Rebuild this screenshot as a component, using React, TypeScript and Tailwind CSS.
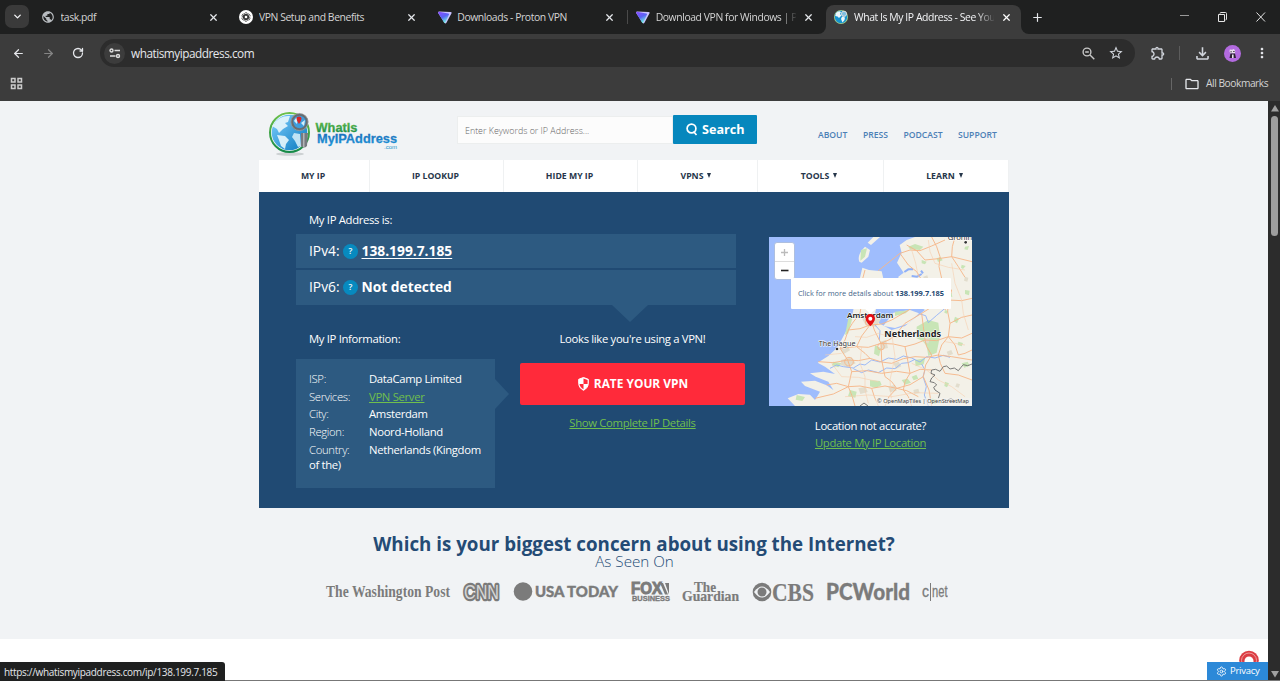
import React from 'react';
import { ArrowLeft, ArrowRight, RotateCw, X, Plus, ChevronDown, Settings } from 'lucide-react';
import { MdOutlineExtension, MdOutlineFileDownload, MdMoreVert, MdStarBorder, MdOutlineFolder, MdPublic } from 'react-icons/md';

function OpenAiIcon() {
  return (
    <svg width="14" height="14" viewBox="0 0 14 14">
      <circle cx="7" cy="7" r="7" fill="#fff" />
      <g fill="none" stroke="#222" strokeWidth=".7">
        {[0, 60, 120, 180, 240, 300].map((a) => (
          <path key={a} transform={`rotate(${a} 7 7)`} d="M5.4 7.900V4.300a1.700 1.700 0 0 1 3.100-.9M5.400 5.200L7 4.300 10 6" />
        ))}
      </g>
    </svg>
  );
}

function ProtonIcon({ id }: { id: string }) {
  return (
    <svg width="14" height="13" viewBox="0 0 14 13">
      <defs>
        <linearGradient id={id} x1="0" y1="0" x2=".5" y2="1">
          <stop offset="0" stopColor="#8b4dff" />
          <stop offset=".55" stopColor="#5a62f5" />
          <stop offset="1" stopColor="#6df0e0" />
        </linearGradient>
      </defs>
      <path d="M1.3.5L12.6.9Q14.2 1.200 13.4 2.600L8.6 11.6Q7.4 13.3 6.3 11.6L.3 2.2Q-.4.6 1.3.5Z" fill="#c9c2ff" />
      <path d="M1 .8L10.2 2.4Q11.5 2.7 10.8 4L7.2 11.4Q6.6 12.3 6 11.5L.4 2.2Q-.2 1 1 .8Z" fill={`url(#${id})`} />
    </svg>
  );
}

function GlobeIcon() {
  return (
    <svg width="14" height="14" viewBox="0 0 14 14">
      <circle cx="7" cy="7" r="7" fill="#9fd08f" />
      <circle cx="7" cy="7" r="6.2" fill="#1593cf" />
      <path d="M2 3Q5 0 7 2L6 4 7.5 5.5 5 8 3.5 6.5 1.2 6ZM8 6.5L11 7.5 10.5 10 8.5 12.5 7 9Z" fill="#eef7fa" />
      <circle cx="10" cy="3.8" r="2.6" fill="#7fbfe0" stroke="#ddd" strokeWidth="1" />
    </svg>
  );
}

const TABS = [
  { title: 'task.pdf', icon: <MdPublic className="size-3.5 text-[#b8bcc0]" /> },
  { title: 'VPN Setup and Benefits', icon: <OpenAiIcon /> },
  { title: 'Downloads - Proton VPN', icon: <ProtonIcon id="pa" /> },
  { title: 'Download VPN for Windows | Pr', icon: <ProtonIcon id="pb" /> },
];

function BrowserChrome() {
  return (
    <div className="h-[101px] shrink-0 bg-[#3c3c3c]">
      <div className="flex h-[34px] bg-[#3c3c3c] text-[10.4px] tracking-[-0.42px]">
        <div className="flex w-[826px] shrink-0 rounded-br-[8px] bg-[#1f2020]">
          <div className="mt-[5px] ml-[5px] flex h-[23px] w-6 shrink-0 items-center justify-center rounded-[7px] bg-[#3a3a3a]">
            <ChevronDown className="size-[11px] text-gray-100" strokeWidth={3} />
          </div>
          <div className="ml-[3px] flex">
            {TABS.map((t, i) => (
              <div key={t.title} className="relative flex h-[34px] w-[198.4px] items-center pl-[9px]">
                {i === 3 && <span className="absolute left-0 h-3.5 w-px bg-[#4a4a4a]" />}
                <span className="w-[19.5px] shrink-0">{t.icon}</span>
                <span
                  className={
                    i === 3
                      ? 'w-[140px] overflow-hidden pt-[2px] whitespace-nowrap [mask-image:linear-gradient(to_right,black_125px,transparent_142px)]'
                      : 'w-[140px] overflow-hidden pt-[2px] whitespace-nowrap'
                  }
                >
                  {t.title}
                </span>
                <X className="ml-[7px] size-[11px] shrink-0 text-gray-200" strokeWidth={2.7} />
              </div>
            ))}
          </div>
        </div>
        <div className="w-[195px] shrink-0 bg-[#1f2020]">
          <div className="mt-[5px] flex h-[29px] items-center rounded-t-[8px] bg-[#3c3c3c] pb-[5px] pl-[8px]">
            <span className="w-5 shrink-0"><GlobeIcon /></span>
            <span className="w-[140px] overflow-hidden pt-px whitespace-nowrap text-gray-100 [mask-image:linear-gradient(to_right,black_122px,transparent_142px)]">
              What Is My IP Address - See You
            </span>
            <X className="ml-[7px] size-[11px] shrink-0 text-white" strokeWidth={2.7} />
          </div>
        </div>
        <div className="flex flex-1 items-center rounded-bl-[8px] bg-[#1f2020] pl-[10px]">
          <Plus className="size-[13px] text-gray-200" strokeWidth={2.2} />
          <svg className="ml-[135px]" width="90" height="12" viewBox="0 0 90 12" fill="none" stroke="#e5e5e5">
            <path d="M1 4.5H10" stroke="#999" />
            <path d="M39.5 3.5h6v7h-6zM41 2.5q0-1 1-1h4.500q1 0 1 1V8q0 1-1 1" />
            <path d="M77.500 1.500l8.500 9M86 1.500l-8.500 9" />
          </svg>
        </div>
      </div>
      <div className="flex h-[38px] items-center">
        <ArrowLeft className="ml-[12px] size-[13px] text-gray-200" strokeWidth={2.3} />
        <ArrowRight className="ml-[17px] size-[13px] text-[#858585]" strokeWidth={2.3} />
        <RotateCw className="ml-[17px] size-[12px] text-gray-200" strokeWidth={2.6} />
        <div className="ml-[16px] flex h-7 w-[1035px] items-center rounded-full bg-[#2c2c2c]">
          <div className="ml-[4px] flex size-[21px] items-center justify-center rounded-full bg-[#3c3c3c]">
            <svg width="12" height="11" viewBox="0 0 12 11" fill="none" stroke="#ddd" strokeWidth="1.400">
              <circle cx="2.500" cy="2.500" r="1.500" /><path d="M5.500 2.500H11M1 8H6.500" /><circle cx="9" cy="8" r="1.500" />
            </svg>
          </div>
          <span className="ml-[6px] flex-1 pt-px text-[11.8px] tracking-[-0.48px] text-gray-200">whatismyipaddress.com</span>
          <svg width="13" height="13" viewBox="0 0 13 13" fill="none" stroke="#c8c8c8" strokeWidth="1.400">
            <circle cx="5" cy="5" r="3.900" /><path d="M8 8l4.300 4.300M3.200 5h3.600" />
          </svg>
          <MdStarBorder className="mr-[11px] ml-[13px] size-4 text-gray-300" />
        </div>
        <MdOutlineExtension className="ml-[15px] size-4 text-gray-300" />
        <span className="ml-[13px] h-3.5 w-px bg-[#5c5c5c]" />
        <MdOutlineFileDownload className="ml-[13px] size-[19px] text-gray-300" />
        <svg className="ml-[12px]" width="17" height="17" viewBox="0 0 17 17">
          <circle cx="8.500" cy="8.500" r="8.500" fill="#b36be0" />
          <path d="M5.500 6.500L5.800 4.500 8 4.800 10 4 11.300 6.500 10.800 8.500 6.500 8.500Z" fill="#e8e1ee" />
          <path d="M6.500 6.800h1.200M9.300 6.500h1.200" stroke="#241b2b" />
          <path d="M6.500 8.500h4.500l1 4.500H5.500Z" fill="#2b2033" />
          <path d="M8 9.500h1.600V13H8Z" fill="#e8e1ee" />
        </svg>
        <MdMoreVert className="ml-[13px] size-4 text-gray-200" />
      </div>
      <div className="flex h-[29px] items-center justify-between pt-px">
        <svg className="-mt-2 ml-[10px]" width="13" height="13" viewBox="0 0 13 13" fill="none" stroke="#ccc" strokeWidth="1.500">
          <path d="M1.500 1.500h3.500v3.500H1.500zM8 1.500h3.500v3.500H8zM1.500 8h3.500v3.500H1.500zM8 8h3.500v3.500H8z" />
        </svg>
        <div className="-mt-[7px] flex items-center">
          <span className="h-3 w-px bg-[#666]" />
          <MdOutlineFolder className="ml-[12px] size-4 text-gray-200" />
          <span className="ml-[6px] w-[74px] text-[10.2px] tracking-[-0.44px] whitespace-nowrap">All Bookmarks</span>
        </div>
      </div>
    </div>
  );
}

function SiteLogo() {
  return (
    <svg width="136" height="48" viewBox="-1 -1 136 48" className="shrink-0">
      <defs>
        <linearGradient id="sea" x1="0" y1="0" x2="1" y2="1"><stop stopColor="#7fd0ff" /><stop offset="1" stopColor="#0878bd" /></linearGradient>
        <linearGradient id="grn" x1="0" y1="0" x2="0" y2="1"><stop stopColor="#6cc04a" /><stop offset="1" stopColor="#168a48" /></linearGradient>
        <linearGradient id="blu" x1="0" y1="0" x2="0" y2="1"><stop stopColor="#1868b4" /><stop offset="1" stopColor="#1e97da" /></linearGradient>
      </defs>
      <ellipse cx="22" cy="43" rx="14" ry="1.800" fill="#cdd1d3" />
      <circle cx="21.500" cy="21.500" r="19.500" fill="#f7fbfa" stroke="url(#grn)" strokeWidth="2" />
      <circle cx="21.500" cy="21.500" r="17.800" fill="url(#sea)" />
      <path d="M6 13Q12 4 22 5l-2 6-3 1 3 3-5 3-4 4-2-4-5-3ZM9 24l8 1 4 4-3 4-1 5-4-3-2-6Z" fill="#e5f5fb" opacity=".92" />
      <path d="M26 22l6 1 1 12-3 1-3-6-3-4Z" fill="#bfe3f5" />
      <path d="M33 22h7l-1 13q-3 3-6 0Z" fill="#777b80" /><path d="M35 22h1.500v14H35Z" fill="#b3b5b7" />
      <circle cx="31.500" cy="11" r="7.500" fill="#3e9ddd" stroke="#686d72" strokeWidth="2.600" />
      <circle cx="31.500" cy="11" r="8.600" fill="none" stroke="#a9adb0" strokeWidth=".6" />
      <path d="M26 10q2-4 4-3l-1 6ZM33 12l4-3-1 6Z" fill="#d6effb" />
      <path d="M31 13q-5-7.500 0-7.500t0 7.500" fill="#d72628" />
      <g fontFamily="Liberation Sans" fontWeight="bold" strokeWidth=".3">
        <text x="47.500" y="20.500" fontSize="13.500" textLength="42" lengthAdjust="spacingAndGlyphs" fill="url(#grn)" stroke="url(#grn)">WhatIs</text>
        <text x="49" y="32" fontSize="13.500" textLength="80" lengthAdjust="spacingAndGlyphs" fill="url(#blu)" stroke="url(#blu)">MyIPAddress</text>
        <text x="116" y="37.500" fontSize="6" fontWeight="normal" textLength="13" fill="#2295cd">.com</text>
      </g>
    </svg>
  );
}

const NAV = [
  { label: 'MY IP', cls: 'w-[111px]' },
  { label: 'IP LOOKUP', cls: 'w-[134px]' },
  { label: 'HIDE MY IP', cls: 'w-[134px]' },
  { label: 'VPNS', cls: 'w-[120px]', menu: true },
  { label: 'TOOLS', cls: 'w-[126px]', menu: true },
  { label: 'LEARN', cls: 'w-[125px]', menu: true },
];

function SiteHeader() {
  return (
    <header>
      <div className="flex h-[59px]">
        <div className="ml-2 w-[190px] pt-[9px]"><SiteLogo /></div>
        <div className="mt-[14px] flex h-[29px] w-[300px]">
          <div className="mt-px flex h-7 w-[216px] items-center border border-[#eceeee] bg-[#fcfcfc] pt-px pl-[7px] text-[8.9px] font-light text-[#666]">
            Enter Keywords or IP Address...
          </div>
          <div className="flex w-[84px] items-center rounded-[1px] bg-[#0687bd] pl-[13px] text-[12.6px] font-bold text-white">
            <svg width="12" height="13" viewBox="0 0 12 13" fill="none" stroke="#fff" strokeWidth="1.700">
              <circle cx="5.500" cy="5.500" r="4.400" /><path d="M7.500 8.500l3 3.500" />
            </svg>
            <span className="ml-[4px] pt-[2px]">Search</span>
          </div>
        </div>
        <div className="mt-[28px] ml-[61px] flex text-[8.6px] leading-3 font-semibold text-[#4c7fb6]">
          <span className="w-[45px]">ABOUT</span>
          <span className="w-[40.5px]">PRESS</span>
          <span className="w-[54.5px]">PODCAST</span>
          <span>SUPPORT</span>
        </div>
      </div>
      <nav className="flex h-8 bg-white">
        {NAV.map((n) => (
          <div key={n.label} className={`${n.cls} flex items-center justify-center border-r border-[#eff1f2] pt-px pr-[2px] text-[8.7px] font-bold text-[#26364a]`}>
            {n.label}
            {n.menu && <svg className="mr-px mb-[2px] ml-[4px]" width="4" height="5" viewBox="0 0 4 5"><path d="M0 0h4L2 5Z" fill="#26364a" /></svg>}
          </div>
        ))}
      </nav>
    </header>
  );
}

function IpRow({ label, value, link }: { label: string; value: string; link?: boolean }) {
  return (
    <div className="flex h-full items-center pl-[13px] text-[13.8px]">
      <span className="w-[34px]">{label}</span>
      <span className="flex size-[15px] items-center justify-center rounded-full bg-[#078abf] text-[8.500px] font-semibold">?</span>
      <span className={link ? 'ml-[3.500px] font-bold underline decoration-1 underline-offset-2' : 'ml-[3.500px] font-bold'}>{value}</span>
    </div>
  );
}

const INFO = [
  ['ISP:', 'DataCamp Limited'],
  ['Services:', 'VPN Server'],
  ['City:', 'Amsterdam'],
  ['Region:', 'Noord-Holland'],
];

function MapDrawing() {
  return (
    <svg width="203" height="169" viewBox="12 21 609 507">
      <rect x="12" y="21" width="609" height="507" fill="#9fbdfd" />
      <g fill="#f3f1e8">
        <path d="M292 113L312 120 350 124 356 150 342 200 330 250 342 280 380 300 420 288 452 262 480 240 440 215 405 190 400 140 416 128 396 98 410 68 404 45 425 30 450 21H621V528H90L68 505 100 492 135 494 150 510 165 485 120 468 108 455 150 452 185 466 205 480 190 455 152 440 135 430 175 425 210 432 180 410 158 398 190 378 218 352 245 300 263 250 275 185Z" />
        <path d="M283 95Q275 75 300 50L315 60 310 80 290 98ZM318 45L308 38 325 21H345Z" />
        <path d="M355 288L385 248 435 240 462 250 432 280 390 294Z" />
      </g>
      <g fill="#c8e5b6">
        <path d="M455 290l35-20 30 8 5 40-10 50-25 10-5-30-12-15-18-8ZM430 50l20-8 25 8-10 10-30-2ZM545 185l15 4 2 12-14-3ZM288 60l18-5-6 25-14 12ZM470 90l15 5-5 8-10-3ZM205 395l25 5-10 12-20-6ZM315 450l30 3 5 12-18 9-17-5ZM410 450l18-4 10 12-18 6ZM570 260l12 6-6 14-10-6ZM580 335l14 4-4 10-12-4ZM255 480l20 5-4 18-22-4ZM330 345l18 10-6 24-15-8ZM515 85l12-4 6 10-14 5ZM250 265l12 0-12 45-10 5ZM450 390l30-5-4 18-24 6ZM95 495l25 6-8 12-20-4Z" />
        <path d="M540 455l12 5-6 12-8-4ZM500 505l16 4-4 14-14-4ZM590 104l12 4-8 9-6-4ZM600 50l12-2-4 12-10-2ZM390 245l42-4-10 9-32 8ZM530 150l14 2-5 10-10-3ZM590 400l18-5 6 12-16 6ZM540 240l10 3-4 8-8-3ZM600 180l14 2-2 14-12-4ZM440 440l14-6 6 12-14 5Z" />
      </g>
      <g fill="#e2ddcd">
        <path d="M225 355l22-12 8 18-20 12ZM228 390l32-8 12 18-25 12-20-8ZM288 260l35-8 25 16-16 22-30-4ZM345 335l18-5 6 24-20 4ZM480 320l15 6-5 15-14-6ZM385 400l16-5 8 14-16 8ZM370 470l20-6 5 18-20 5ZM280 475l22-5 6 16-22 6ZM545 365l14-5 5 12-14 5ZM475 140l12-4 3 11-13 3ZM600 140l10 3-3 12-10-3ZM445 480l15-4 4 13-16 3ZM575 460l10 3-4 10-10-3Z" />
      </g>
      <g fill="none" stroke="#8fb0f8">
        <path strokeWidth="2.600" d="M195 415L215 405 235 410 265 414 285 402 300 405 320 390 345 396 370 384 395 388 415 378 440 384 465 396 485 380 510 384 535 376 555 382M265 416L290 428 310 420 340 428 365 414 390 416 410 400 430 398 450 388M465 252L482 257 490 278 515 256 540 235 533 212 538 190M330 285L345 302 343 330M470 402L480 420 474 440 484 470 478 495 490 528" />
        <path strokeWidth="6" d="M418 126l12-8 14 0M440 138l16 2 14-8M468 122l6 8" />
      </g>
      <g fill="none" stroke="#f5b78a" strokeWidth="2.800" strokeLinejoin="round">
        <path d="M340 122L405 70 435 60 465 62 500 48 540 30M405 70L430 105 455 125 470 150M425 45L455 62 480 90 520 86 560 80 621 95M500 21L515 50 525 80 522 110 530 145M570 21L562 50 560 80 580 110 600 142M300 120L292 150 295 190 285 250 262 280 250 300 240 330 225 355 248 390 280 392 315 385 350 396 380 400 415 386 450 380 485 382 520 375 560 380 621 390M315 260L328 300 348 340 375 328 395 310 420 280 470 250 510 225 550 210 590 212 621 205M250 300L285 296 315 285 350 282 380 270 440 235M348 340L350 390 360 440 380 455 395 475 425 482 460 500M225 355L275 350 310 352 348 340 385 342 420 350 450 342 480 330 515 332 550 320 590 324 621 310M248 390L260 425 250 470 262 500 270 528M260 425L305 422 350 430 395 424 435 430 465 418 500 420M420 350L428 390 435 430 420 455 415 480 430 500 440 528M315 285L290 318 275 350 300 370 315 385M480 330L485 350 500 375 482 405 475 440 492 480 500 528M550 210L548 245 555 280 550 320 570 345 580 375 600 370 621 360M470 250L475 290 480 330M160 395L205 398 248 390M185 465L215 460 250 470 285 468 320 475 360 468 395 475 435 464 475 440M320 475L328 500 340 528M150 505L205 492 250 470M540 240L552 210 560 180 540 165 530 145M550 320L530 345 520 375 526 400 540 430 580 435 621 450M395 475L372 500 360 528M555 280L590 262 621 255" />
        <circle cx="312" cy="276" r="11" /><circle cx="252" cy="395" r="13" /><circle cx="348" cy="350" r="10" />
      </g>
      <g fill="none" stroke="#f7cfae" strokeWidth="1.800">
        <path d="M440 60L452 100 460 140M490 30L495 65 510 100 550 112 600 120M270 320L305 322 340 310 380 322 420 320M200 400L230 440 280 442 340 455M290 350L285 400 300 440 300 480 310 520M380 300L384 340 390 380 375 450 380 520M540 335L600 345M440 400L485 420 520 450 560 470 600 500M240 500L310 495 380 500 450 488 520 490M560 100L570 160 590 210 595 250 610 300M180 375L230 370" />
      </g>
      <path fill="none" stroke="#666" strokeWidth="2.600" d="M621 402L608 407 595 404 588 412 580 422 568 414 555 417 545 408 535 410 525 424 512 418 500 420 498 430 510 435 500 444 495 455 508 458 515 465 506 472 510 480 525 490 520 505M285 528l12-9 12 9M548 510l10-5 12 9" />
      <g fill="#333" fontFamily="Noto Sans, sans-serif" stroke="#fff" strokeWidth="3" strokeLinejoin="round" paintOrder="stroke">
        <circle cx="602" cy="37" r="4" /><circle cx="216" cy="357" r="4" />
        <text x="548" y="29" fontSize="23">Groningen</text>
        <text x="246" y="264" fontSize="23" fontWeight="600" fill="#222" textLength="139" lengthAdjust="spacingAndGlyphs">Amsterdam</text>
        <text x="358" y="321" fontSize="26" fontWeight="bold" fill="#222" textLength="170" lengthAdjust="spacingAndGlyphs">Netherlands</text>
        <text x="161" y="349" fontSize="22" textLength="111" lengthAdjust="spacingAndGlyphs">The Hague</text>
      </g>
      <rect x="332" y="504" width="289" height="24" fill="#f4f4f2" opacity=".6" />
      <text x="336" y="519" fontSize="16" fontFamily="Noto Sans, sans-serif" fill="#444" textLength="276" lengthAdjust="spacingAndGlyphs">© OpenMapTiles | OpenStreetMap</text>
      <path d="M300 236h32l-16 16Z" fill="#fff" />
      <path d="M316 289Q302 274 302 266a14 14 0 0 1 28 0Q330 274 316 289Z" fill="#e60d12" />
      <circle cx="316" cy="266" r="6" fill="#fff" />
    </svg>
  );
}

function MapCard() {
  return (
    <div className="mt-[45px] ml-[32px] w-[203px]">
      <div className="relative h-[169px] overflow-hidden">
        <MapDrawing />
        <div className="absolute top-[5px] left-[5px] h-[38px] w-[21px] rounded-[3px] border border-[#aebfdf] bg-white">
          <svg width="19" height="36" viewBox="0 0 19 36" fill="none">
            <path d="M6 9.500h7M9.500 6v7" stroke="#bbb" strokeWidth="1.300" />
            <path d="M0 18.500h19" stroke="#ddd" /><path d="M6 27.500h7.500" stroke="#222" strokeWidth="1.600" />
          </svg>
        </div>
        <div className="absolute top-[41px] left-[22px] flex h-[31px] w-[160px] items-center justify-center rounded-[1px] bg-white text-[7.45px] whitespace-nowrap text-[#45668a]">
          Click for more details about&nbsp;<b className="text-[#1f4a73]">138.199.7.185</b>
        </div>
      </div>
      <div className="mt-[11px] text-center text-[11.3px] leading-[17px] tracking-[-0.34px]">
        <div className="font-medium">Location not accurate?</div>
        <a className="text-[#70bf4d] underline underline-offset-1">Update My IP Location</a>
      </div>
    </div>
  );
}

function IpPanel() {
  return (
    <section className="flex h-[316px] bg-[#204a73] pl-[37px] text-white">
      <div className="w-[441px] pt-[19px]">
        <div className="h-[23px] pl-[13px] text-[11.3px] leading-[17px] tracking-[-0.32px]">My IP Address is:</div>
        <div className="h-[34px] w-[440.400px] bg-[#2d5a81]"><IpRow label="IPv4:" value="138.199.7.185" link /></div>
        <div className="mt-[2px] h-[35px] w-[440.400px] bg-[#2d5a81]"><IpRow label="IPv6:" value="Not detected" /></div>
        <svg className="ml-[316px]" width="36" height="17" viewBox="0 0 36 17"><path d="M0 0H36L18 17Z" fill="#2d5a81" /></svg>
        <div className="flex w-[449px] pt-[8px] text-[11.3px] tracking-[-0.33px]">
          <div className="w-[199px]">
            <div className="h-[29px] pl-[13px] leading-[18px]">My IP Information:</div>
            <div className="h-[129px] bg-[#2d5a81] pt-[11px] pl-[13px] leading-[17.7px]">
              {INFO.map(([k, v]) => (
                <div key={k} className="flex">
                  <span className="w-[60px] font-light">{k}</span>
                  {k === 'Services:' ? <a className="text-[#70bf4d] underline underline-offset-1">{v}</a> : <span className="font-medium">{v}</span>}
                </div>
              ))}
              <div className="pt-px leading-[15.500px]">
                <span className="inline-block w-[60px] font-light">Country:</span>
                <span className="font-medium">Netherlands (Kingdom<br />of the)</span>
              </div>
            </div>
          </div>
          <svg className="mt-[49px]" width="14" height="30" viewBox="0 0 14 30"><path d="M0 0L14 15 0 30Z" fill="#2d5a81" /></svg>
          <div className="ml-[11px] w-[225px] text-center">
            <div className="h-[33px] leading-[18px]">Looks like you're using a VPN!</div>
            <button className="flex h-[42px] w-full items-center justify-center rounded-[2px] bg-[#ff2a3a] text-[11.9px] font-bold tracking-normal">
              <svg className="mr-[5px] ml-[1px]" width="11" height="14" viewBox="0 0 11 14">
                <path d="M5.500.5L10.300 2.300V6.500Q10 11 5.500 13.300Q1 11 .7 6.500V2.300Z" fill="#fff" stroke="#fff" />
                <path d="M5.500 7H1.500Q2 10.500 5.500 12.300ZM5.500 1.500V7H9.600V3Z" fill="#ff2a3a" />
              </svg>
              RATE YOUR VPN
            </button>
            <a className="mt-[9px] block leading-[17px] text-[#70bf4d] underline underline-offset-1">Show Complete IP Details</a>
          </div>
        </div>
      </div>
      <MapCard />
    </section>
  );
}

function PressLogos() {
  return (
    <svg width="624" height="24" viewBox="324 580 624 24" fill="#7b7b7b">
      <text x="326" y="597" fontFamily="Liberation Serif" fontSize="17" fontWeight="bold" textLength="124" lengthAdjust="spacingAndGlyphs">The Washington Post</text>
      <text x="464" y="599" fontFamily="Liberation Sans" fontSize="20.500" fill="#d6d6d6" stroke="#7b7b7b" strokeWidth="4.500" strokeLinejoin="round" paintOrder="stroke" textLength="35" lengthAdjust="spacingAndGlyphs">CNN</text>
      <circle cx="523" cy="591.500" r="9.300" />
      <text x="535" y="597" fontFamily="Lato" fontSize="14.500" fontWeight="900" stroke="#7b7b7b" strokeWidth=".4" textLength="83" lengthAdjust="spacingAndGlyphs">USA TODAY</text>
      <text x="631" y="594" fontFamily="Liberation Sans" fontSize="16" fontWeight="bold" stroke="#7b7b7b" strokeWidth="1" textLength="31" lengthAdjust="spacingAndGlyphs">FOX</text>
      <path d="M660 583h3l5 11.500h-3ZM665 583h4v11.500Z" />
      <text x="632" y="601" fontFamily="Liberation Sans" fontSize="6.500" fontWeight="bold" stroke="#7b7b7b" strokeWidth=".3" textLength="38" lengthAdjust="spacingAndGlyphs">BUSINESS</text>
      <g fontFamily="Liberation Serif" fontWeight="bold" stroke="#7b7b7b" strokeWidth=".2">
        <text x="694" y="592" fontSize="14" textLength="22" lengthAdjust="spacingAndGlyphs">The</text>
        <text x="682" y="601" fontSize="14" textLength="57" lengthAdjust="spacingAndGlyphs">Guardian</text>
        <text x="772" y="600.500" fontSize="25" textLength="42" lengthAdjust="spacingAndGlyphs">CBS</text>
      </g>
      <circle cx="762" cy="592" r="9.300" />
      <path d="M754 592Q762 581 770 592 762 603 754 592Z" fill="#f1f3f5" /><circle cx="762" cy="592" r="4.500" />
      <text x="826" y="600" fontFamily="Lato" fontSize="22" fontWeight="900" textLength="84" lengthAdjust="spacingAndGlyphs" stroke="#7b7b7b" strokeWidth=".3">PCWorld</text>
      <g fontFamily="Liberation Sans" fontSize="17" stroke="#7b7b7b" strokeWidth=".3">
        <text x="922" y="597" textLength="7" lengthAdjust="spacingAndGlyphs">c</text>
        <path d="M930.500 583v18" strokeWidth="1" />
        <text x="932" y="597" textLength="15.500" lengthAdjust="spacingAndGlyphs">net</text>
      </g>
    </svg>
  );
}

export default function App() {
  return (
    <div className="relative flex h-[681px] w-[1280px] flex-col overflow-hidden bg-white font-['Open_Sans',sans-serif] text-[10.8px] text-[#d4d4d4]">
      <BrowserChrome />
      <div className="flex flex-1">
        <main className="w-[1268px]">
          <div className="h-[538px] bg-[#f1f3f5]">
            <div className="ml-[259px] w-[750px]">
              <SiteHeader />
              <IpPanel />
            </div>
            <div className="flex flex-col items-center pt-[23px] text-[#244b75]">
              <h2 className="text-[18.75px] leading-[26px] font-bold">Which is your biggest concern about using the Internet?</h2>
              <div className="-mt-[6px] h-[29px] pl-px text-[15.2px] leading-[20px] font-light">As Seen On</div>
              <div className="ml-[4px]"><PressLogos /></div>
            </div>
          </div>
        </main>
        <div className="flex w-3 flex-col items-center bg-[#2c2c2c]">
          <svg className="mt-[4px] ml-px" width="8" height="7" viewBox="0 0 8 7"><path d="M4 0L8 6.500H0Z" fill="#a0a0a0" /></svg>
          <div className="mt-[4px] ml-px h-[120px] w-[7px] rounded-full bg-[#9d9d9d]" />
          <svg className="mt-auto mb-[3px] ml-px" width="8" height="7" viewBox="0 0 8 7"><path d="M4 6.500L8 0H0Z" fill="#a0a0a0" /></svg>
        </div>
      </div>
      <div className="absolute bottom-0 left-0 h-px w-full bg-[#777]" />
      <div className="absolute bottom-0 left-0 flex h-[19px] w-[225px] items-center rounded-tr-[3px] bg-[#1f2020] pt-px pl-[4px] text-[10px] tracking-[-0.32px] whitespace-nowrap text-gray-200">
        https://whatismyipaddress.com/ip/138.199.7.185
      </div>
      <svg className="absolute bottom-[11px] left-[1238px]" width="22" height="20" viewBox="0 0 22 20">
        <circle cx="11" cy="10.500" r="9.800" fill="#dc3d43" />
        <circle cx="11" cy="10.500" r="7.500" fill="none" stroke="#ef9b9d" />
        <path d="M6.500 20V11a4.500 4.500 0 0 1 9 0v9Z" fill="#fff" />
      </svg>
      <div className="absolute bottom-px left-[1207px] flex h-[18px] w-[61px] items-center bg-[#2c89d8] pt-px pl-[9px] text-[9.5px] font-medium tracking-[-0.25px] text-white">
        <Settings className="mr-[3px] size-[11px]" strokeWidth={1.800} />
        Privacy
      </div>
    </div>
  );
}
